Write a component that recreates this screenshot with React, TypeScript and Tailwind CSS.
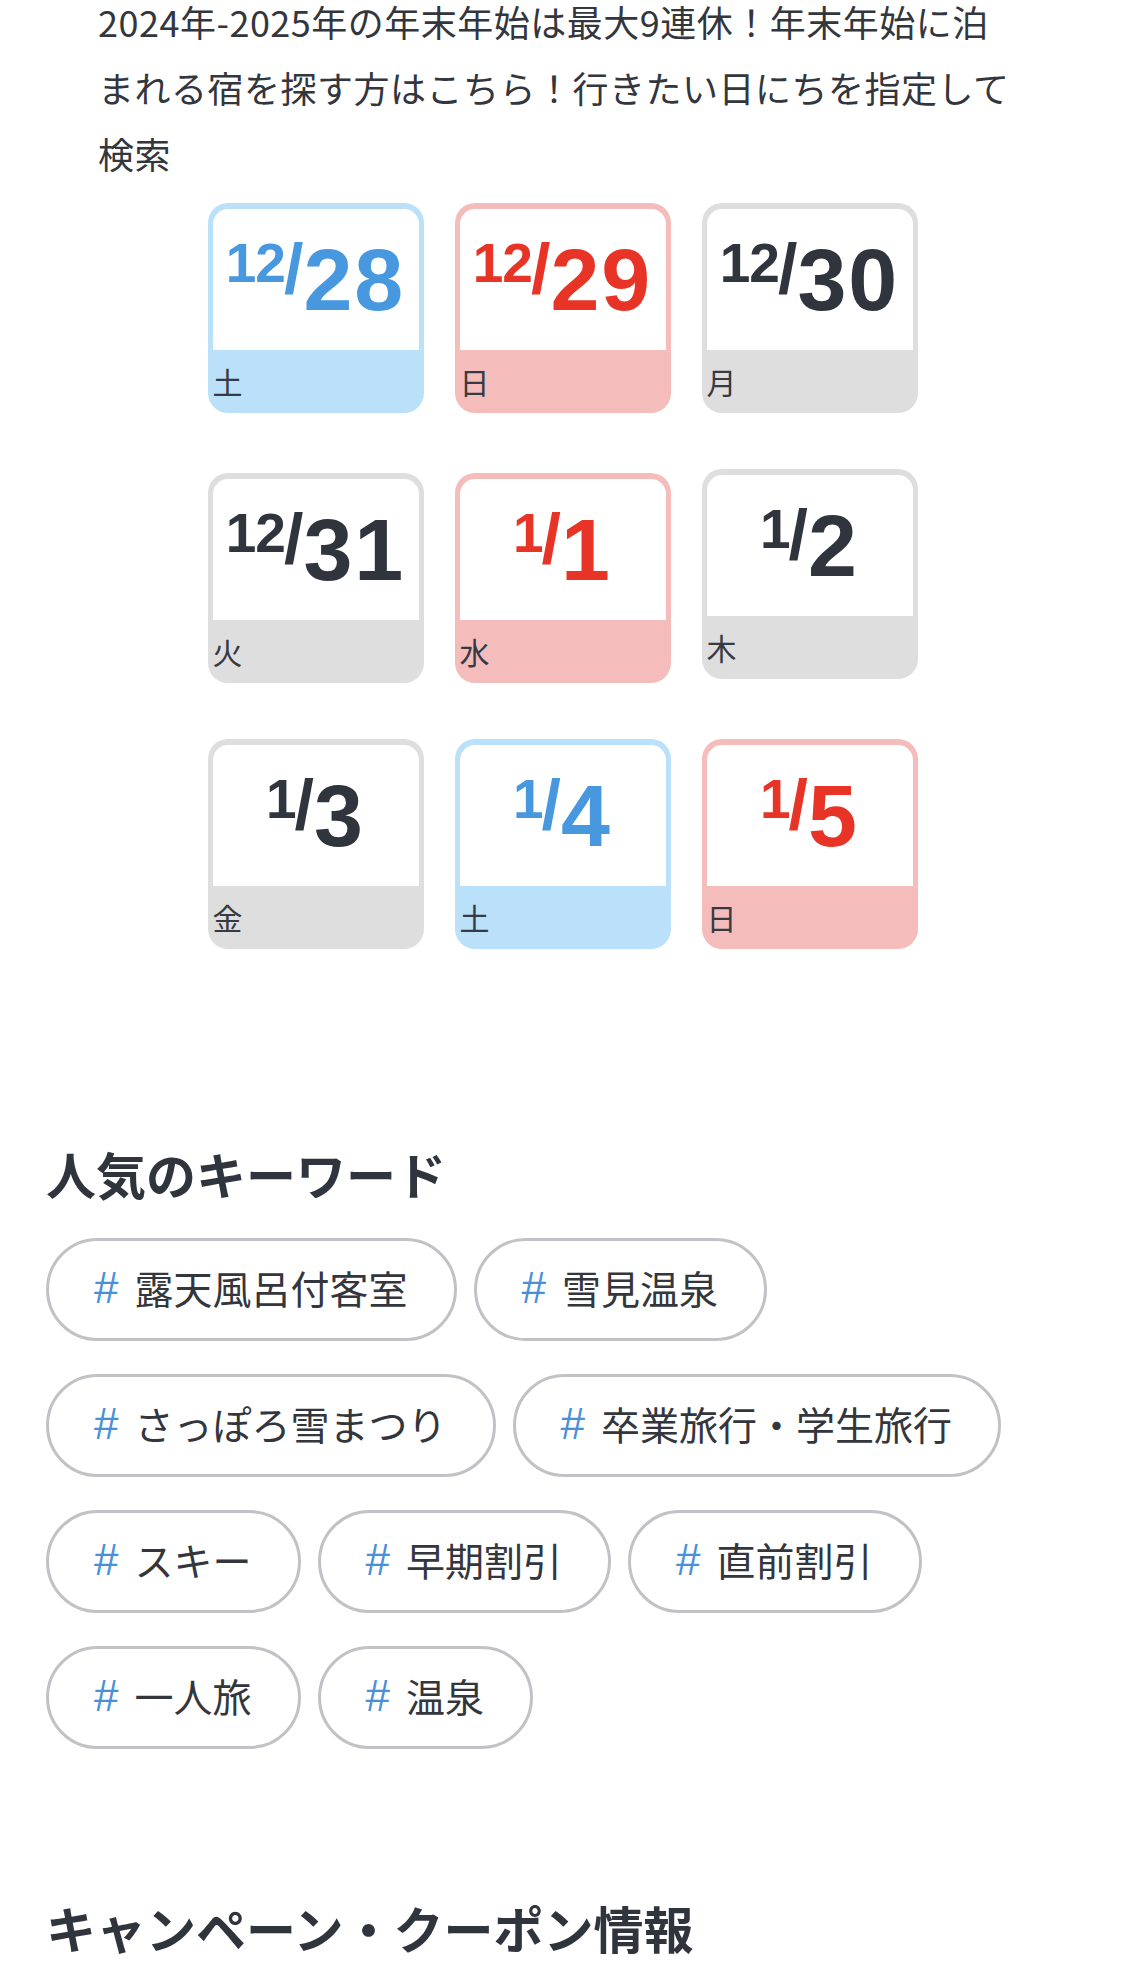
import React from "react";

type Tone = "sat" | "sun" | "day";

const days: { m: string; d: string; w: string; tone: Tone; lift?: boolean }[] = [
  { m: "12", d: "28", w: "土", tone: "sat" },
  { m: "12", d: "29", w: "日", tone: "sun" },
  { m: "12", d: "30", w: "月", tone: "day" },
  { m: "12", d: "31", w: "火", tone: "day" },
  { m: "1", d: "1", w: "水", tone: "sun" },
  { m: "1", d: "2", w: "木", tone: "day", lift: true },
  { m: "1", d: "3", w: "金", tone: "day" },
  { m: "1", d: "4", w: "土", tone: "sat" },
  { m: "1", d: "5", w: "日", tone: "sun" },
];

const toneBg: Record<Tone, string> = {
  sat: "bg-[#bae1f9]",
  sun: "bg-[#f4bdbc]",
  day: "bg-[#dedede]",
};

const toneText: Record<Tone, string> = {
  sat: "text-[#4898e0]",
  sun: "text-[#e83426]",
  day: "text-[#30343d]",
};

const keywords = [
  "露天風呂付客室",
  "雪見温泉",
  "さっぽろ雪まつり",
  "卒業旅行・学生旅行",
  "スキー",
  "早期割引",
  "直前割引",
  "一人旅",
  "温泉",
];

function DayCard({ day }: { day: (typeof days)[number] }) {
  return (
    <div
      className={`flex h-[210px] w-[216px] flex-col rounded-[20px] px-[5px] pt-[6px] ${toneBg[day.tone]} ${
        day.lift ? "-mt-[4px]" : ""
      }`}
    >
      <div
        className={`flex h-[141px] items-start justify-center rounded-t-[15px] bg-white pt-[27px] font-['Liberation_Sans',Arial,sans-serif] font-bold leading-none ${toneText[day.tone]}`}
      >
        <span className="text-[55px] leading-none tracking-[-1px]">{day.m}</span>
        <span className="-mt-[2px] -ml-[1px] text-[70px] leading-none">/</span>
        <span className="text-[88px] leading-none tracking-[2px]">{day.d}</span>
      </div>
      <div className="h-[63px] text-[30px] leading-[63px] text-[#363a42]">{day.w}</div>
    </div>
  );
}

export default function App() {
  const rows = [days.slice(0, 3), days.slice(3, 6), days.slice(6, 9)];
  const rowGap = ["", "mt-[60px]", "mt-[56px]"];

  return (
    <div className="min-h-[1963px] w-full overflow-hidden bg-white font-['Noto_Sans_CJK_JP',sans-serif] text-[#33363d]">
      {/* intro */}
      <p className="-mt-[12px] pl-[98px] text-[36px] leading-[66px] tracking-[0.5px] whitespace-nowrap">
        2024年-2025年の年末年始は最大9連休！年末年始に泊
        <br />
        まれる宿を探す方はこちら！行きたい日にちを指定して
        <br />
        検索
      </p>

      {/* calendar */}
      <div className="mt-[17px] flex flex-col items-center">
        {rows.map((row, i) => (
          <div key={i} className={`flex items-start gap-[31px] ${rowGap[i]}`}>
            {row.map((d) => (
              <DayCard key={d.m + d.d} day={d} />
            ))}
          </div>
        ))}
      </div>

      {/* keywords */}
      <section className="px-[46px]">
        <h2 className="mt-[189px] text-[50px] font-bold leading-[70px] text-[#30343d]">人気のキーワード</h2>
        <div className="mt-[30px] flex flex-wrap gap-x-[17px] gap-y-[33px]">
          {keywords.map((k) => (
            <div
              key={k}
              className="flex h-[103px] items-center rounded-full border-[3px] border-[#c2c2c6] pb-[4px] pl-[45px] pr-[46px]"
            >
              <span className="font-['Liberation_Sans',Arial,sans-serif] text-[44px] leading-none text-[#4a90d9]">#</span>
              <span className="ml-[16px] text-[39px] leading-none text-[#33363d]">{k}</span>
            </div>
          ))}
        </div>
      </section>

      {/* campaign */}
      <section className="px-[46px]">
        <h2 className="mt-[143px] text-[50px] font-bold leading-[70px] text-[#30343d]">キャンペーン・クーポン情報</h2>
      </section>
    </div>
  );
}
